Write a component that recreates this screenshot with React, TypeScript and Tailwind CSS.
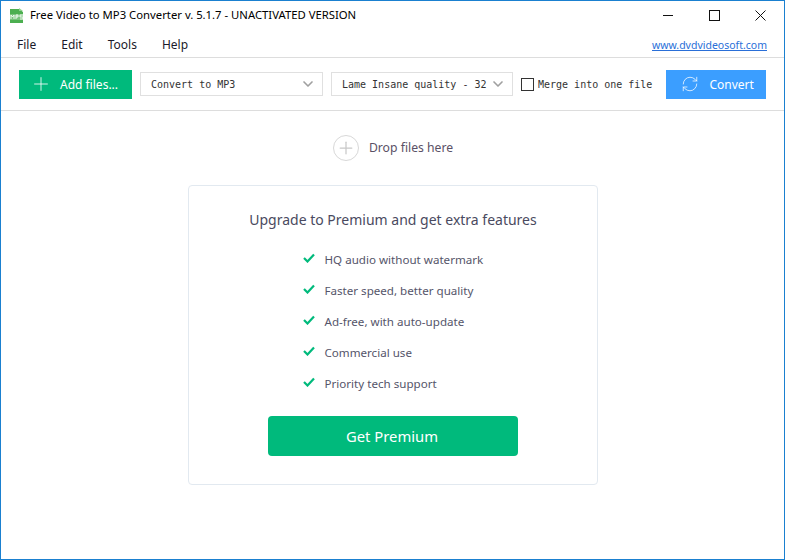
import React from 'react';
import { ChevronDown, Plus, RefreshCw } from 'lucide-react';

const features = [
    'HQ audio without watermark',
    'Faster speed, better quality',
    'Ad-free, with auto-update',
    'Commercial use',
    'Priority tech support',
];

const AppIcon = () => (
    <svg width="16" height="16" viewBox="0 0 16 16" className="shrink-0">
        <path d="M1 1h9l4 3v11H1z" fill="#4caf50" />
        <path d="M10 0l4 3h-4z" fill="#8fd18f" />
        <rect x="0" y="6" width="15" height="6" fill="#ffffff" opacity="0.25" />
        <path d="M2 11V7l1.5 2L5 7v4M7 11V7h2v2H7M14 7h-3v2h3v2h-3" fill="none" stroke="#ffffff" strokeWidth="0.9" />
    </svg>
);

const WindowControls = () => (
    <div className="ml-auto mr-[18px] flex items-center gap-[35px]">
        <svg width="11" height="11" viewBox="0 0 11 11">
            <path d="M0 5.5h10" stroke="#111111" strokeWidth="1" />
        </svg>
        <svg width="11" height="11" viewBox="0 0 11 11">
            <rect x="0.5" y="0.5" width="10" height="10" fill="none" stroke="#111111" strokeWidth="1" />
        </svg>
        <svg width="11" height="11" viewBox="0 0 11 11">
            <path d="M0.5 0.5l10 10M10.5 0.5l-10 10" stroke="#111111" strokeWidth="1" />
        </svg>
    </div>
);

const Select: React.FC<{ label: string; className: string }> = ({ label, className }) => (
    <div className={`flex h-6 items-center justify-between border border-[#e0e0e0] pl-[10px] pr-[6px] ${className}`}>
        <span className="whitespace-nowrap font-['DejaVu_Sans_Mono',monospace] text-[10px] text-[#333333]">{label}</span>
        <ChevronDown className="h-4 w-4 shrink-0 text-[#a0a0a0]" strokeWidth={2.5} />
    </div>
);

export default function App() {
    return (
        <div className="flex h-[560px] w-[785px] flex-col border border-[#1a80d0] bg-white font-['Noto_Sans',sans-serif]">
            <div className="flex h-[29px] items-center">
                <div className="ml-[8px] flex items-center gap-[5px]">
                    <AppIcon />
                    <span className="text-[11.3px] text-black">Free Video to MP3 Converter v. 5.1.7 - UNACTIVATED VERSION</span>
                </div>
                <WindowControls />
            </div>

            <div className="flex h-[28px] items-center border-b border-[#dddddd] pl-4 pr-[17px] pt-[3px] text-xs text-[#1a1a2a]">
                <div className="flex gap-[25px]">
                    <span>File</span>
                    <span>Edit</span>
                    <span>Tools</span>
                    <span>Help</span>
                </div>
                <span className="ml-auto text-[10.5px] text-[#2a6fd8] underline">www.dvdvideosoft.com</span>
            </div>

            <div className="flex h-[53px] items-center border-b border-[#dddddd] pl-[18px]">
                <button className="flex h-[29px] w-[113px] items-center bg-[#00ba7c] pl-[11px] text-xs text-white">
                    <Plus className="h-[22px] w-[22px]" strokeWidth={0.9} />
                    <span className="ml-[8px] pt-px">Add files...</span>
                </button>
                <Select label="Convert to MP3" className="ml-2 w-[183px]" />
                <Select label="Lame Insane quality - 32" className="ml-2 w-[182px]" />
                <div className="ml-2 h-[13px] w-[13px] border border-[#333333]" />
                <span className="ml-[4px] font-['DejaVu_Sans_Mono',monospace] text-[10px] text-[#333333]">Merge into one file</span>
                <button className="ml-[14px] flex h-[29px] w-[100px] items-center bg-[#3b9eff] pl-[15px] text-xs text-white">
                    <RefreshCw className="h-[18px] w-[18px]" strokeWidth={1} />
                    <span className="ml-[10px] pt-px">Convert</span>
                </button>
            </div>

            <div className="flex flex-1 flex-col items-center">
                <div className="ml-[1px] mt-6 flex h-[26px] items-center gap-[10px] text-[12.2px] text-[#5a5166]">
                    <div className="flex h-[26px] w-[26px] items-center justify-center rounded-full border border-[#d8d8d8]">
                        <Plus className="h-5 w-5 text-[#c8c8c8]" strokeWidth={1.5} />
                    </div>
                    <span className="pt-px">Drop files here</span>
                </div>

                <div className="ml-[1px] mt-[24px] flex h-[300px] w-[410px] flex-col items-center rounded-sm border border-[#e2e9f0] pt-6">
                    <h2 className="text-sm font-normal leading-5 text-[#4a4a60]">Upgrade to Premium and get extra features</h2>
                    <ul className="mt-5 flex w-[181px] flex-col gap-[13px]">
                        {features.map((text) => (
                            <li key={text} className="flex h-[18px] items-center gap-[10px] whitespace-nowrap text-[11.6px] text-[#55556a]">
                                <svg width="12" height="10" viewBox="0 0 12 10" className="mb-[2px] shrink-0">
                                    <path d="M1 5l3.5 3.5L11 1.5" fill="none" stroke="#00ba7c" strokeWidth="2.2" />
                                </svg>
                                <span className="pt-px">{text}</span>
                            </li>
                        ))}
                    </ul>
                    <button className="mt-6 h-10 w-[250px] rounded-sm bg-[#00ba7c] pr-[2px] text-[14.8px] text-white">Get Premium</button>
                </div>
            </div>
        </div>
    );
}
